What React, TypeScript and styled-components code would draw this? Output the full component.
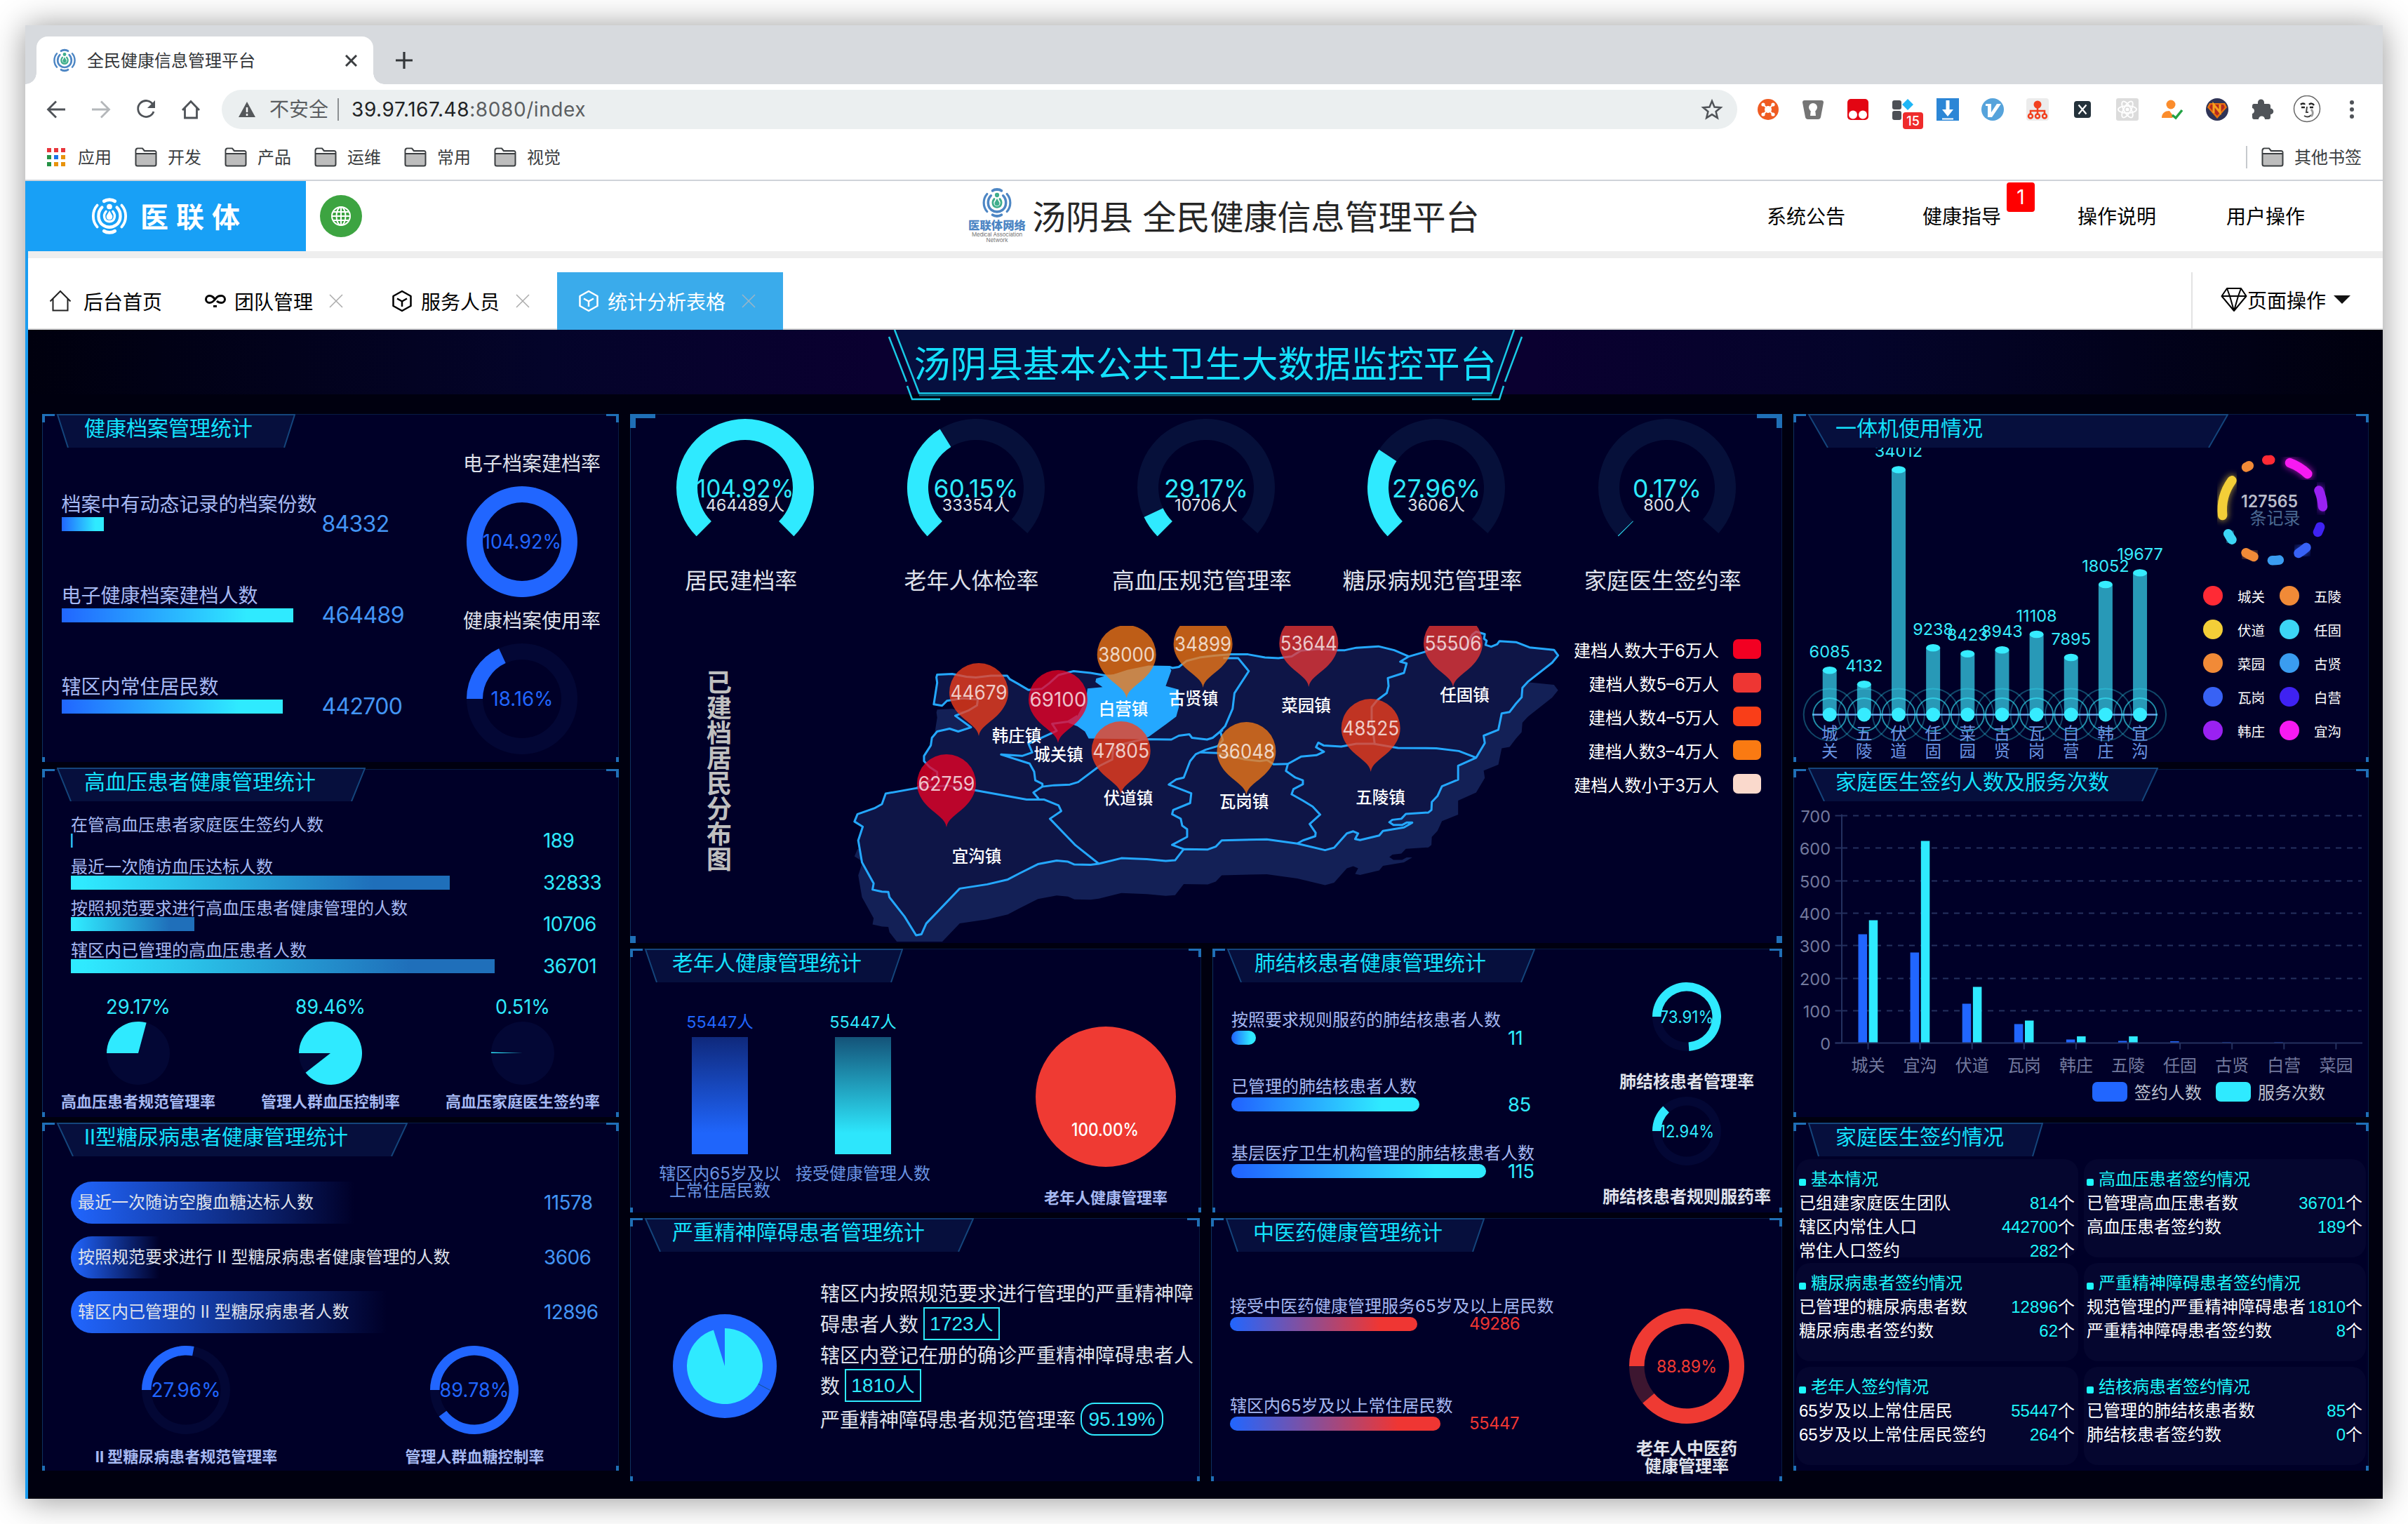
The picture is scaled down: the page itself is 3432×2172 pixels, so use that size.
import React from 'react';
import styled, { createGlobalStyle, css } from 'styled-components';

const SANS = `Inter, "Noto Sans CJK SC", sans-serif`;
const ARIAL = `"Liberation Sans", "Noto Sans CJK SC", sans-serif`;
const CYAN = '#2feaff';
const BLUE = '#2166ff';
const RED = '#ef3a33';
const LILAC = '#a6b9f2';
const PALE = '#dfe1ea';

const GlobalStyle = createGlobalStyle`
  * { box-sizing: border-box; }
  body { margin: 0; background: #fff; font-family: ${SANS}; }
  svg { display: block; flex: none; }
`;

/* ---------- geometry helpers ---------- */

const polar = (cx: number, cy: number, r: number, deg: number) => {
  const a = (deg * Math.PI) / 180;
  return `${(cx + r * Math.sin(a)).toFixed(2)} ${(cy - r * Math.cos(a)).toFixed(2)}`;
};

const arcPath = (cx: number, cy: number, r: number, a0: number, a1: number) =>
  `M${polar(cx, cy, r, a0)}A${r} ${r} 0 ${a1 - a0 > 180 ? 1 : 0} 1 ${polar(cx, cy, r, a1)}`;

const ringPath = (cx: number, cy: number, ro: number, ri: number, a0: number, end: number) => {
  const a1 = Math.min(end, a0 + 359.98);
  const big = a1 - a0 > 180 ? 1 : 0;
  const inner = ri > 0 ? `L${polar(cx, cy, ri, a1)}A${ri} ${ri} 0 ${big} 0 ${polar(cx, cy, ri, a0)}` : `L${cx} ${cy}`;
  return `M${polar(cx, cy, ro, a0)}A${ro} ${ro} 0 ${big} 1 ${polar(cx, cy, ro, a1)}${inner}Z`;
};

interface LabelProps {
  x: number;
  y: number;
  size?: number;
  fill?: string;
  anchor?: 'start' | 'middle' | 'end';
  weight?: number;
  len?: number;
  children: React.ReactNode;
}

const Label = ({ x, y, size = 24, fill = '#fff', anchor = 'middle', weight = 400, len, children }: LabelProps) => (
  <text
    x={x}
    y={y}
    fontSize={size}
    fill={fill}
    fontWeight={weight}
    textAnchor={anchor}
    dominantBaseline="central"
    textLength={len}
    lengthAdjust="spacingAndGlyphs"
  >
    {children}
  </text>
);

/* ---------- browser frame ---------- */

const Desktop = styled.div`
  width: 3432px;
  height: 2172px;
  padding: 36px;
  background: #fff;
  overflow: hidden;
`;

const Window = styled.div`
  width: 3360px;
  height: 2100px;
  display: flex;
  flex-direction: column;
  background: #fff;
  box-shadow: 0 2px 44px rgba(0, 0, 0, 0.42);
`;

const TabStrip = styled.div`
  height: 84px;
  background: #d7dade;
  display: flex;
  align-items: flex-end;
  padding-left: 16px;
`;

const BrowserTab = styled.div`
  position: relative;
  width: 480px;
  height: 68px;
  border-radius: 16px 16px 0 0;
  background: #fff;
  display: flex;
  align-items: center;
  padding: 0 23px;
  font-size: 24px;
  color: #333639;
  &::before,
  &::after {
    content: '';
    position: absolute;
    bottom: 0;
    width: 16px;
    height: 16px;
  }
  &::before {
    left: -16px;
    background: radial-gradient(circle at 0 0, transparent 15.5px, #fff 16px);
  }
  &::after {
    right: -16px;
    background: radial-gradient(circle at 100% 0, transparent 15.5px, #fff 16px);
  }
`;

const TabTitle = styled.span`
  margin-left: 15px;
  padding-bottom: 3px;
  flex: 1;
`;

const NewTab = styled.div`
  height: 68px;
  margin-left: 31px;
  display: flex;
  align-items: center;
`;

const Toolbar = styled.div`
  height: 72px;
  display: flex;
  align-items: center;
  padding-left: 28px;
`;

const NavIcons = styled.div`
  display: flex;
  gap: 32px;
  width: 252px;
`;

const Omnibox = styled.div`
  width: 2160px;
  height: 56px;
  border-radius: 28px;
  background: #ebeff0;
  display: flex;
  align-items: center;
  padding: 0 20px 0 22px;
  font-size: 28px;
  color: #5b5e61;
`;

const Security = styled.span`
  margin-left: 18px;
  padding-right: 13px;
  border-right: 2px solid #8c8f92;
  line-height: 32px;
`;

const Url = styled.span`
  margin-left: 18px;
  flex: 1;
  letter-spacing: 0.58px;
  b {
    font-weight: 400;
    color: #202224;
  }
`;

const Extensions = styled.div`
  display: flex;
  gap: 24px;
  margin-left: 24px;
`;

const ExtSlot = styled.div`
  position: relative;
  width: 40px;
  height: 40px;
`;

const ExtBadge = styled.span`
  position: absolute;
  left: 20px;
  top: 24px;
  width: 29px;
  height: 24px;
  border-radius: 4px;
  background: #ef2b2b;
  color: #fff;
  font-size: 18px;
  font-weight: 500;
  line-height: 25px;
  text-align: center;
`;

const Bookmarks = styled.div`
  height: 66px;
  border-bottom: 2px solid #cfd3d9;
  display: flex;
  align-items: center;
  padding: 0 28px 0 31px;
  font-size: 24px;
  color: #3b3e41;
`;

const Bookmark = styled.div<{ $w: number; $gap?: number }>`
  width: ${p => p.$w}px;
  display: flex;
  align-items: center;
  gap: ${p => p.$gap ?? 15}px;
  white-space: nowrap;
  span {
    padding-bottom: 3px;
  }
`;

const OtherBookmarks = styled(Bookmark)`
  margin-left: auto;
  padding-left: 20px;
  border-left: 2px solid #c6c9cd;
  height: 32px;
`;

/* ---------- application header ---------- */

const AppHeader = styled.header`
  height: 100px;
  display: flex;
  align-items: center;
  & > * {
    flex: none;
  }
`;

const Brand = styled.div`
  width: 400px;
  height: 100px;
  background: #18a0f6;
  display: flex;
  align-items: center;
  padding-left: 93px;
  gap: 17px;
  color: #fff;
  font-size: 40px;
  font-weight: 700;
  letter-spacing: 11px;
  span {
    padding-bottom: 3px;
  }
`;

const GlobeButton = styled.div`
  width: 60px;
  height: 60px;
  margin-left: 20px;
  border-radius: 50%;
  background: #3da441;
  display: flex;
  align-items: center;
  justify-content: center;
`;

const NetworkLogo = styled.div`
  width: 82px;
  height: 82px;
  margin-left: 864px;
  display: flex;
  flex-direction: column;
  align-items: center;
  color: #4d86c4;
  font-size: 16.4px;
  font-weight: 900;
  line-height: 20px;
  small {
    width: 82px;
    font-size: 8px;
    font-weight: 400;
    line-height: 7.5px;
    color: #777;
    text-align: center;
    letter-spacing: -0.2px;
  }
`;

const AppTitle = styled.h1`
  width: 646px;
  margin: 0;
  padding: 0 0 4px 9px;
  font-size: 48px;
  font-weight: 400;
  color: #262626;
  white-space: pre;
  letter-spacing: 0;
`;

const Menu = styled.nav`
  display: flex;
  margin-left: 410px;
  padding-bottom: 2px;
  font-size: 28px;
  color: #000;
`;

const MenuItem = styled.span<{ $gap: number }>`
  position: relative;
  width: 112px;
  margin-right: ${p => p.$gap}px;
`;

const MenuBadge = styled.i`
  position: absolute;
  left: 120px;
  top: -27px;
  width: 40px;
  height: 42px;
  border-radius: 4px;
  background: #f00;
  color: #fff;
  font: 400 28px/42px ${SANS};
  text-align: center;
`;

const Divider = styled.div`
  height: 10px;
  background: #eee;
`;

const Content = styled.div`
  flex: 1;
  border-left: 4px solid #1b9df0;
  display: flex;
  flex-direction: column;
`;

const PageTabs = styled.div`
  height: 102px;
  border-bottom: 2px solid #d9d9d9;
  display: flex;
  align-items: flex-end;
  font-size: 28px;
  color: #000;
`;

const PageTab = styled.div<{ $active?: boolean; $w?: number; $gap?: number }>`
  height: 82px;
  margin-bottom: -2px;
  padding: 0 39px 0 30px;
  ${p => p.$w && css`width: ${p.$w}px; padding-right: 0;`}
  display: flex;
  align-items: center;
  gap: ${p => p.$gap ?? 12}px;
  white-space: nowrap;
  color: ${p => (p.$active ? '#fff' : '#000')};
  background: ${p => (p.$active ? '#3aabeb' : 'transparent')};
`;

const CloseMark = styled.span`
  margin-left: 11px;
  color: #aaa;
`;

const PageActions = styled.div`
  height: 80px;
  width: 273px;
  margin-left: auto;
  border-left: 2px solid #e3e3e3;
  display: flex;
  align-items: center;
  padding: 0 0 2px 40px;
`;

/* ---------- dashboard shell ---------- */

const Dashboard = styled.main`
  height: 1666px;
  background: #00000f;
`;

const Banner = styled.div`
  height: 120px;
  background: linear-gradient(90deg, #00000e 0%, #04042a 22%, #0a0030 36%, #0a0030 64%, #04042a 78%, #00000e 100%) no-repeat 0 0 / 100% 92px;
  display: flex;
  justify-content: center;
`;

const Columns = styled.div`
  display: grid;
  grid-template-columns: 822px 1642px 820px;
  column-gap: 16px;
  padding-left: 20px;
`;

const Column = styled.div<{ $rows: string }>`
  display: grid;
  grid-template-rows: ${p => p.$rows};
`;

const Pair = styled.div<{ $cols: string }>`
  display: grid;
  grid-template-columns: ${p => p.$cols};
  justify-content: space-between;
`;

const mark = 'linear-gradient(#1f6fb6, #1f6fb6)';

const PanelBox = styled.section<{ $big?: boolean; $h: number }>`
  height: ${p => p.$h}px;
  display: flex;
  flex-direction: column;
  background-color: #000028;
  background-repeat: no-repeat;
  background-image: ${mark}, ${mark}, ${mark}, ${mark}, ${mark}, ${mark},
    linear-gradient(#0e315f, #0e315f), linear-gradient(#081b45, #081b45), linear-gradient(#081b45, #081b45);
  background-position: 0 0, 0 0, 100% 0, 100% 0, 0 100%, 100% 100%, 0 0, 0 0, 100% 0;
  background-size: ${p => (p.$big ? '36px 6px, 8px 20px, 36px 6px, 8px 20px, 8px 10px, 8px 10px' : '18px 3px, 4px 12px, 18px 3px, 4px 12px, 4px 7px, 4px 7px')},
    1px 100%, 100% 1px, 1px 100%;
`;

const TitleBox = styled.h2<{ $lift?: boolean; $w: number }>`
  position: relative;
  width: ${p => p.$w}px;
  height: ${p => (p.$lift ? 50 : 48)}px;
  margin: ${p => (p.$lift ? -2 : 0)}px 0 0 21px;
  padding-left: 39px;
  font-size: 30px;
  font-weight: 400;
  line-height: ${p => (p.$lift ? 41 : 40)}px;
  color: #14e1fc;
  white-space: nowrap;
  svg {
    position: absolute;
    left: 0;
    top: 0;
  }
  span {
    position: relative;
  }
`;

const PanelTitle = ({ text, w, lift }: { text: string; w: number; lift?: boolean }) => {
  const inset = Math.round(w * 0.046);
  return (
    <TitleBox $w={w} $lift={lift}>
      <svg width={w} height="48" viewBox={`0 0 ${w} 48`}>
        <path d={`M1 1H${w - 1}L${w - inset} 48H${inset}Z`} fill="#060f3d" />
        <path d={`M${inset} 48L1 1H${w - 1}L${w - inset} 48`} fill="none" stroke="#14457c" strokeWidth="2" />
      </svg>
      <span>{text}</span>
    </TitleBox>
  );
};

const Body = styled.div<{ $dir?: string }>`
  flex: 1;
  min-height: 0;
  display: flex;
  flex-direction: ${p => p.$dir ?? 'row'};
`;

const Stack = styled.div<{ $w?: number; $pt?: number; $pl?: number; $align?: string }>`
  width: ${p => (p.$w ? `${p.$w}px` : 'auto')};
  padding: ${p => p.$pt ?? 0}px 0 0 ${p => p.$pl ?? 0}px;
  display: flex;
  flex-direction: column;
  align-items: ${p => p.$align ?? 'stretch'};
  flex: none;
`;

const Caption = styled.div<{ $size: number; $lh: number; $mt?: number; $color?: string; $bold?: boolean }>`
  font-size: ${p => p.$size}px;
  line-height: ${p => p.$lh}px;
  margin-top: ${p => p.$mt ?? 0}px;
  color: ${p => p.$color ?? PALE};
  font-weight: ${p => (p.$bold ? 700 : 400)};
  white-space: nowrap;
  text-align: center;
`;

/* ---------- meters ---------- */

const MeterBox = styled.div<{ $gap: number }>`
  margin-bottom: ${p => p.$gap}px;
`;

const MeterName = styled.div<{ $size: number; $lh: number }>`
  font-size: ${p => p.$size}px;
  line-height: ${p => p.$lh}px;
  color: ${LILAC};
  white-space: nowrap;
`;

const MeterLine = styled.div<{ $track: number }>`
  height: 20px;
  display: grid;
  grid-template-columns: ${p => p.$track}px auto;
  align-items: center;
`;

const MeterBar = styled.div<{ $fill: string; $round?: boolean }>`
  height: 20px;
  background: ${p => p.$fill};
  border-radius: ${p => (p.$round ? 10 : 0)}px;
`;

const MeterValue = styled.span<{ $size: number; $color: string }>`
  font-size: ${p => p.$size}px;
  line-height: 20px;
  color: ${p => p.$color};
  letter-spacing: -0.022em;
`;

interface MeterStyle {
  size: number;
  lh: number;
  gap: number;
  track: number;
  fill: string;
  round?: boolean;
  valueSize: number;
  valueColor: string;
}

const Meters = ({ rows, look }: { rows: [string, number, string][]; look: MeterStyle }) => (
  <>
    {rows.map(([name, width, value]) => (
      <MeterBox key={name} $gap={look.gap}>
        <MeterName $size={look.size} $lh={look.lh}>{name}</MeterName>
        <MeterLine $track={look.track}>
          <MeterBar $fill={look.fill} $round={look.round} style={{ width }} />
          <MeterValue $size={look.valueSize} $color={look.valueColor}>{value}</MeterValue>
        </MeterLine>
      </MeterBox>
    ))}
  </>
);

interface RingProps {
  r: number;
  inner?: number;
  pct: number;
  color: string;
  track?: string;
  text?: string;
  size?: number;
  len?: number;
}

const Ring = ({ r, inner = 0, pct, color, track = '#030735', text, size = 28, len }: RingProps) => (
  <svg width={r * 2} height={r * 2} viewBox={`0 0 ${r * 2} ${r * 2}`}>
    <path d={ringPath(r, r, r, inner, -90, 270)} fill={track} />
    <path d={ringPath(r, r, r, inner, -90, -90 + Math.min(pct, 100) * 3.6)} fill={color} />
    {text && <Label x={r} y={r} size={size} fill={color} len={len}>{text}</Label>}
  </svg>
);

/* ---------- left column ---------- */

const RingShift = styled.div<{ $mt: number }>`
  margin: ${p => p.$mt}px 0 0 5px;
`;

const RecordsPanel = () => (
  <PanelBox $h={496}>
    <PanelTitle text="健康档案管理统计" w={340} />
    <Body>
      <Stack $w={600} $pt={63} $pl={27.5}>
        <Meters
          rows={[
            ['档案中有动态记录的档案份数', 60, '84332'],
            ['电子健康档案建档人数', 330, '464489'],
            ['辖区内常住居民数', 315, '442700'],
          ]}
          look={{ size: 28, lh: 36, gap: 74, track: 371, fill: `linear-gradient(90deg, ${BLUE}, ${CYAN} 80%)`, valueSize: 32, valueColor: '#4395f5' }}
        />
      </Stack>
      <Stack $w={200} $pt={5} $align="flex-start">
        <Caption $size={28} $lh={36}>电子档案建档率</Caption>
        <RingShift $mt={14}><Ring r={79} inner={56} pct={100} color={BLUE} text="104.92%" len={112} /></RingShift>
        <Caption $size={28} $lh={36} $mt={16}>健康档案使用率</Caption>
        <RingShift $mt={14}><Ring r={79} inner={56} pct={18.16} color={BLUE} text="18.16%" len={89} /></RingShift>
      </Stack>
    </Body>
  </PanelBox>
);

const Thirds = styled.div<{ $n: number; $pt: number }>`
  display: grid;
  grid-template-columns: repeat(${p => p.$n}, 1fr);
  justify-items: center;
  padding-top: ${p => p.$pt}px;
`;

const HypertensionPanel = () => (
  <PanelBox $h={496}>
    <PanelTitle text="高血压患者健康管理统计" w={440} lift />
    <Body $dir="column">
      <Stack $pt={20} $pl={41}>
        <Meters
          rows={[
            ['在管高血压患者家庭医生签约人数', 3, '189'],
            ['最近一次随访血压达标人数', 540, '32833'],
            ['按照规范要求进行高血压患者健康管理的人数', 176, '10706'],
            ['辖区内已管理的高血压患者人数', 604, '36701'],
          ]}
          look={{ size: 24, lh: 24, gap: 15.5, track: 673, fill: `linear-gradient(90deg, ${CYAN} 3%, #1f6fba 80%)`, valueSize: 28, valueColor: CYAN }}
        />
      </Stack>
      <Thirds $n={3} $pt={16}>
        {([['29.17%', 29.17, '高血压患者规范管理率', 92], ['89.46%', 89.46, '管理人群血压控制率', 100], ['0.51%', 0.51, '高血压家庭医生签约率', 78]] as const).map(([t, pct, name, len]) => (
          <Stack key={name} $align="center">
            <svg width="120" height="38" viewBox="0 0 120 38"><Label x={60} y={17} size={28} fill={CYAN} len={len}>{t}</Label></svg>
            <Ring r={45} pct={pct} color={CYAN} />
            <Caption $size={22} $lh={28} $mt={10} $color={LILAC} $bold>{name}</Caption>
          </Stack>
        ))}
      </Thirds>
    </Body>
  </PanelBox>
);

const PillRow = styled.div`
  height: 60px;
  margin-bottom: 18.3px;
  display: grid;
  grid-template-columns: 674px auto;
  align-items: center;
`;

const Pill = styled.div<{ $fade: number }>`
  height: 60px;
  padding-left: 10px;
  border-radius: 30px 0 0 30px;
  background: linear-gradient(90deg, ${BLUE}, rgba(33, 102, 255, 0)) no-repeat 0 0 / ${p => p.$fade}px 100%;
  font-size: 24px;
  line-height: 60px;
  color: ${PALE};
  white-space: pre;
`;

const DiabetesPanel = () => (
  <PanelBox $h={496}>
    <PanelTitle text="II型糖尿病患者健康管理统计" w={500} />
    <Body $dir="column">
      <Stack $pt={35.5} $pl={41}>
        {([['最近一次随访空腹血糖达标人数', 404, '11578'], ['按照规范要求进行 II 型糖尿病患者健康管理的人数', 126, '3606'], ['辖区内已管理的 II 型糖尿病患者人数', 450, '12896']] as const).map(([name, fade, value]) => (
          <PillRow key={name}>
            <Pill $fade={fade}>{name}</Pill>
            <MeterValue $size={28} $color="#4395f5">{value}</MeterValue>
          </PillRow>
        ))}
      </Stack>
      <Thirds $n={2} $pt={0}>
        <Stack $align="center">
          <Ring r={63} inner={49.5} pct={27.96} color={BLUE} text="27.96%" len={99} />
          <Caption $size={22} $lh={28} $mt={18} $color={LILAC} $bold>II 型糖尿病患者规范管理率</Caption>
        </Stack>
        <Stack $align="center">
          <Ring r={63} inner={49.5} pct={89.78} color={BLUE} text="89.78%" len={99} />
          <Caption $size={22} $lh={28} $mt={18} $color={LILAC} $bold>管理人群血糖控制率</Caption>
        </Stack>
      </Thirds>
    </Body>
  </PanelBox>
);

/* ---------- centre: gauges and map ---------- */

const GaugeRow = styled.div`
  display: grid;
  grid-template-columns: repeat(5, 1fr);
  justify-items: center;
  padding-top: 7px;
`;

const GaugeName = styled(Caption)`
  margin-left: -12px;
`;

const gauges = [
  { pct: '104.92%', count: '464489人', sweep: 270, name: '居民建档率', len: 139 },
  { pct: '60.15%', count: '33354人', sweep: 103.4, name: '老年人体检率', len: 121 },
  { pct: '29.17%', count: '10706人', sweep: 19.6, name: '高血压规范管理率', len: 120 },
  { pct: '27.96%', count: '3606人', sweep: 78.6, name: '糖尿病规范管理率', len: 126 },
  { pct: '0.17%', count: '800人', sweep: 0.7, name: '家庭医生签约率', len: 98 },
];

const Gauge = ({ g }: { g: (typeof gauges)[number] }) => (
  <Stack $align="center">
    <svg width="196" height="196" viewBox="0 0 196 196">
      <path d={ringPath(98, 98, 98, 68, -135, 131.5)} fill="#06103a" />
      <path d={ringPath(98, 98, 98, 68, -135, -135 + g.sweep)} fill={CYAN} />
      <Label x={98} y={98.5} size={36} fill={CYAN} len={g.len}>{g.pct}</Label>
      <Label x={98} y={122.5} size={23.5} fill={PALE}>{g.count}</Label>
    </svg>
    <GaugeName $size={32} $lh={40} $mt={15}>{g.name}</GaugeName>
  </Stack>
);

const outline =
  '832,787 872,785 910,793 935,795 975,790 1018,790 1025,800 1045,812 1075,831 1110,828 1130,812 1155,788 1195,777 1240,782 1283,790 1300,790 1340,776 1395,764 1450,765 1458,768 1475,765 1495,748 1530,738 1568,733 1613,729 1659,729 1704,738 1740,740 1775,735 1800,718 1850,713 1897,717 1917,717 1947,710 2006,706 2048,717 2087,735 2129,722 2160,705 2200,708 2236,712 2256,672 2266,664 2289,671 2287,684 2294,690 2291,702 2306,707 2322,700 2328,691 2372,694 2408,709 2473,716 2484,732 2468,753 2403,808 2389,825 2387,852 2372,870 2355,894 2334,898 2325,945 2286,962 2289,983 2266,1025 2218,1048 2218,1088 2175,1107 2163,1135 2148,1152 2147,1175 2139,1182 2079,1186 2067,1200 2043,1203 2035,1210 2046,1218 2069,1218 2081,1211 2096,1211 2074,1225 2018,1235 2008,1248 1957,1261 1944,1258 1952,1242 1939,1236 1922,1242 1888,1283 1864,1290 1790,1271 1709,1259 1589,1262 1573,1280 1552,1288 1488,1287 1465,1319 1440,1321 1390,1316 1322,1313 1262,1329 1240,1332 1197,1331 1180,1323 1150,1320 1100,1330 1050,1357 1020,1374 965,1388 892,1400 803,1500 790,1531 776,1534 745,1480 705,1425 702,1410 685,1409 660,1403 663,1385 632,1325 622,1262 634,1223 612,1208 620,1187 665,1170 685,1158 695,1128 778,1112 805,1095 832,1080 832,1066 812,1052 797,1035 797,1020 815,990 818,968 832,950 865,942 888,950 922,938 880,905 915,890 938,875 940,858 900,855 858,862 845,876 823,872 832,810 830,795';

const whiteCamp =
  '1283,790 1340,778 1395,764 1450,765 1455,775 1440,820 1475,830 1475,880 1468,907 1440,930 1395,965 1380,972 1235,970 1225,950 1205,935 1180,925 1205,905 1228,860 1232,827 1272,823 1253,808 1255,798';

const borders = [
  '778,1112 860,1105 930,1118 1070,1145 1117,1145 1155,1162 1162,1178 1132,1200 1200,1276 1262,1329',
  '1102,1143 1088,1125 1112,1108 1143,1104 1185,1102 1207,1095 1265,1048 1298,1030 1300,1000 1330,985 1380,972 1455,973 1475,962 1503,958 1510,968 1550,973 1565,968 1583,952 1592,946',
  '1112,1108 1112,1100 1093,1090 1090,1065 1078,1042 1002,1016 1058,1020 1085,1010 1075,985 1110,968 1150,948 1138,928 1180,922 1205,905',
  '1583,952 1598,935 1618,885 1623,840 1661,777 1633,740 1593,740',
  '1586,952 1592,975 1578,992 1547,1002 1520,1015 1505,1035 1488,1082 1468,1087 1448,1102 1508,1127 1505,1155 1460,1175 1457,1187 1480,1200 1484,1220 1497,1230 1497,1252 1457,1275 1488,1287',
  '1532,1010 1580,1012 1650,1030 1690,1035 1710,1032 1727,1044 1765,1043',
  '2266,1025 2220,1006 2160,998 2058,997 1993,985 1947,985 1907,993 1860,990 1846,982 1840,995 1861,1008 1841,1018 1800,1022 1765,1043 1760,1063 1785,1082 1805,1090 1805,1101 1780,1115 1775,1130 1805,1148 1831,1165 1851,1188 1823,1215 1839,1240 1838,1250 1805,1262 1790,1271',
  '2087,735 2064,750 2081,755 2074,782 2031,797 2033,820 2028,840 2003,860 1988,880 1988,920 1996,985',
];

const SCALE = ['#f20022', '#ee3633', '#f93e18', '#fa7a12', '#fad9cc'];

const pins: [number, number, string, number][] = [
  [1395, 987, '44679', 2],
  [1508, 997, '69100', 0],
  [1605.7, 933, '38000', 3],
  [1714.6, 918, '34899', 3],
  [1865.3, 917, '53644', 1],
  [2071, 917, '55506', 1],
  [1953.7, 1038, '48525', 2],
  [1597.7, 1070, '47805', 2],
  [1776.4, 1071, '36048', 3],
  [1349, 1117, '62759', 0],
];

const towns: [number, number, string][] = [
  [1449, 1048, '韩庄镇'],
  [1508.5, 1075, '城关镇'],
  [1601, 1010, '白营镇'],
  [1701, 995, '古贤镇'],
  [1861.5, 1005.5, '菜园镇'],
  [2087.5, 990, '任固镇'],
  [1608, 1137.5, '伏道镇'],
  [1773, 1142, '瓦岗镇'],
  [1967.5, 1136, '五陵镇'],
  [1392, 1220, '宜沟镇'],
];

const PIN = 'M-42 0A42 42 0 0 1 42 0C42 13 35 24 26 33C12 46 2 50 0 62C-2 50 -12 46 -26 33C-35 24 -42 13 -42 0Z';

const TownMap = () => (
  <svg width="1040" height="450" viewBox="1200 892 1040 450">
    <g transform="translate(890 570) scale(0.5357 0.4974)" strokeLinejoin="round">
      <polygon points={outline} transform="translate(0 100)" fill="#132056" />
      <polygon points={outline} fill="#0e1547" />
      <polygon points={whiteCamp} fill="#24a8ff" />
      {borders.map(b => (
        <polyline key={b} points={b} fill="none" stroke="#24a8ff" strokeWidth="3" vectorEffect="non-scaling-stroke" />
      ))}
      <polygon points={outline} fill="none" stroke="#24a8ff" strokeWidth="3" vectorEffect="non-scaling-stroke" />
    </g>
    {towns.map(([x, y, name]) => (
      <Label key={name} x={x} y={y} size={23.5} weight={500}>{name}</Label>
    ))}
    {pins.map(([x, y, value, level]) => (
      <g key={value} transform={`translate(${x} ${y})`}>
        <path d={PIN} fill={SCALE[level]} opacity="0.76" />
        <Label x={0} y={0} size={28} fill="rgba(255,255,255,0.76)" len={81}>{value}</Label>
      </g>
    ))}
  </svg>
);

const MapRow = styled.div`
  display: flex;
  align-items: flex-start;
`;

const VerticalTitle = styled.div`
  writing-mode: vertical-rl;
  width: 36px;
  margin: 106px 160px 0 106px;
  font-size: 36px;
  font-weight: 700;
  line-height: 36px;
  color: #bfbfbf;
  white-space: nowrap;
`;

const MapBox = styled.div`
  margin-top: 44px;
`;

const MapLegend = styled.div`
  margin: 63px 30px 0 auto;
  display: flex;
  flex-direction: column;
  gap: 20px;
`;

const MapLegendRow = styled.div`
  height: 28px;
  display: flex;
  align-items: center;
  justify-content: flex-end;
  gap: 20px;
  font-size: 24px;
  color: #fff;
`;

const Swatch = styled.i<{ $w: number; $c: string }>`
  width: ${p => p.$w}px;
  height: 28px;
  border-radius: 7px;
  background: ${p => p.$c};
`;

const MapPanel = () => (
  <PanelBox $h={754} $big>
    <GaugeRow>{gauges.map(g => <Gauge key={g.name} g={g} />)}</GaugeRow>
    <MapRow>
      <VerticalTitle>已建档居民分布图</VerticalTitle>
      <MapBox><TownMap /></MapBox>
      <MapLegend>
        {['建档人数大于6万人', '建档人数5–6万人', '建档人数4–5万人', '建档人数3–4万人', '建档人数小于3万人'].map((t, i) => (
          <MapLegendRow key={t}>
            {t}
            <Swatch $w={40} $c={SCALE[i]} />
          </MapLegendRow>
        ))}
      </MapLegend>
    </MapRow>
  </PanelBox>
);

/* ---------- centre: lower panels ---------- */

const TallBar = styled.div<{ $from: string; $to: string }>`
  width: 80px;
  height: 167px;
  margin-top: 6px;
  background: linear-gradient(180deg, ${p => p.$from}, ${p => p.$to} 82%);
`;

const ElderlyPanel = () => (
  <PanelBox $h={376}>
    <PanelTitle text="老年人健康管理统计" w={368} />
    <Body>
      <Stack $w={26} />
      <Stack $w={204} $pt={42} $align="center">
        <Caption $size={23.5} $lh={30} $color={BLUE}>55447人</Caption>
        <TallBar $from="#0f297c" $to="#1f65fb" />
        <Caption $size={24} $lh={24} $mt={16} $color="#6a94e2">辖区内65岁及以<br />上常住居民数</Caption>
      </Stack>
      <Stack $w={204} $pt={42} $align="center">
        <Caption $size={23.5} $lh={30} $color={CYAN}>55447人</Caption>
        <TallBar $from="#145379" $to="#2de6fc" />
        <Caption $size={24} $lh={24} $mt={16} $color="#6a94e2">接受健康管理人数</Caption>
      </Stack>
      <Stack $w={344} $pl={144} $pt={63} $align="center">
        <svg width="200" height="200" viewBox="0 0 200 200">
          <circle cx="100" cy="100" r="100" fill={RED} />
          <Label x={99} y={147} size={25} weight={500} len={96}>100.00%</Label>
        </svg>
        <Caption $size={22} $lh={28} $mt={30} $color={LILAC} $bold>老年人健康管理率</Caption>
      </Stack>
    </Body>
  </PanelBox>
);

const TextLines = styled.div`
  margin-left: 62px;
  padding-top: 36px;
  font-family: ${ARIAL};
  font-size: 28px;
  color: ${PALE};
`;

const TextLine = styled.div<{ $h: number }>`
  height: ${p => p.$h}px;
  display: flex;
  align-items: center;
  white-space: nowrap;
`;

const Chip = styled.span<{ $w: number; $round?: boolean }>`
  width: ${p => p.$w}px;
  height: 47px;
  margin-left: 7px;
  border: 2px solid ${CYAN};
  border-radius: ${p => (p.$round ? 20 : 0)}px;
  color: ${CYAN};
  line-height: 43px;
  text-align: center;
`;

const PieSlot = styled.div`
  margin: 89px 0 0 61px;
`;

const MentalPanel = () => (
  <PanelBox $h={375}>
    <PanelTitle text="严重精神障碍患者管理统计" w={469} />
    <Body>
      <PieSlot>
        <svg width="148" height="148" viewBox="0 0 148 148">
          <circle cx="74" cy="74" r="74" fill={BLUE} />
          <path d={`M${polar(74, 74, 54, 118)}L${polar(74, 74, 74, 118)}`} stroke="#14508f" strokeWidth="1" />
          <path d={ringPath(74, 74, 54, 0, 0, 342.7)} fill={CYAN} />
        </svg>
      </PieSlot>
      <TextLines>
        <TextLine $h={44}>辖区内按照规范要求进行管理的严重精神障</TextLine>
        <TextLine $h={44}>碍患者人数<Chip $w={109}>1723人</Chip></TextLine>
        <TextLine $h={43}>辖区内登记在册的确诊严重精神障碍患者人</TextLine>
        <TextLine $h={46}>数<Chip $w={109}>1810人</Chip></TextLine>
        <TextLine $h={50}>严重精神障碍患者规范管理率<Chip $w={118} $round>95.19%</Chip></TextLine>
      </TextLines>
    </Body>
  </PanelBox>
);

const TuberculosisPanel = () => (
  <PanelBox $h={376}>
    <PanelTitle text="肺结核患者健康管理统计" w={439} />
    <Body>
      <Stack $w={556} $pt={39} $pl={27}>
        <Meters
          rows={[
            ['按照要求规则服药的肺结核患者人数', 35, '11'],
            ['已管理的肺结核患者人数', 268, '85'],
            ['基层医疗卫生机构管理的肺结核患者人数', 363, '115'],
          ]}
          look={{ size: 24, lh: 30, gap: 45, track: 394, fill: `linear-gradient(90deg, ${BLUE} 3%, ${CYAN} 80%)`, round: true, valueSize: 27.5, valueColor: CYAN }}
        />
      </Stack>
      <Stack $w={240} $align="center">
        <Ring r={49} inner={36.5} pct={73.91} color={CYAN} text="73.91%" size={24} len={77} />
        <Caption $size={24} $lh={32} $mt={28} $bold>肺结核患者管理率</Caption>
        <Stack $pt={5}><Ring r={49} inner={36.5} pct={12.94} color={CYAN} text="12.94%" size={24} len={78} /></Stack>
        <Caption $size={24} $lh={32} $mt={29} $bold>肺结核患者规则服药率</Caption>
      </Stack>
    </Body>
  </PanelBox>
);

const HerbalPanel = () => (
  <PanelBox $h={375}>
    <PanelTitle text="中医药健康管理统计" w={369} />
    <Body>
      <Stack $w={578} $pt={63} $pl={27}>
        <Meters
          rows={[
            ['接受中医药健康管理服务65岁及以上居民数', 267, '49286'],
            ['辖区内65岁及以上常住居民数', 300, '55447'],
          ]}
          look={{ size: 24, lh: 30, gap: 92, track: 341, fill: `linear-gradient(90deg, ${BLUE}, #ef3633 80%)`, round: true, valueSize: 24, valueColor: '#ee3633' }}
        />
      </Stack>
      <Stack $w={200} $pt={81} $align="center">
        <Ring r={82} inner={60.5} pct={88.89} color={RED} track="#3d1630" text="88.89%" size={24} len={86} />
        <Caption $size={24} $lh={25} $mt={23} $bold>老年人中医药<br />健康管理率</Caption>
      </Stack>
    </Body>
  </PanelBox>
);

/* ---------- right column ---------- */

const usage: [string, string, number, string][] = [
  ['城', '关', 955.3, '6085'],
  ['五', '陵', 975.3, '4132'],
  ['伏', '道', 669.4, '34012'],
  ['任', '固', 923.2, '9238'],
  ['菜', '园', 931.7, '8423'],
  ['古', '贤', 926.3, '8943'],
  ['瓦', '岗', 904, '11108'],
  ['白', '营', 937, '7895'],
  ['韩', '庄', 833, '18052'],
  ['宜', '沟', 816.4, '19677'],
];

const UsageChart = () => (
  <svg width="560" height="448" viewBox="2556 638 560 448">
    <path d="M2583 1018.5H3075" stroke="#6aa2e8" strokeWidth="2.5" />
    {usage.map(([a, b, top, value], i) => {
      const x = 2607.7 + i * 49.15;
      return (
        <g key={value}>
          <rect x={x - 10} y={top} width="20" height={1018.5 - top} fill="#2899b7" />
          <ellipse cx={x} cy={top} rx="10" ry="5.2" fill="#36ecff" />
          <circle cx={x} cy="1018.5" r="37" fill="none" stroke="#36ecff" strokeOpacity="0.3" strokeWidth="2" />
          <circle cx={x} cy="1018.5" r="23.5" fill="none" stroke="#36ecff" strokeOpacity="0.6" strokeWidth="2" />
          <circle cx={x} cy="1018.5" r="10" fill="#36ecff" />
          <Label x={x} y={top - 27} size={23.5} fill="#36ecff">{value}</Label>
          <Label x={x} y={1045.5} size={23.5} fill="#6a94e2">{a}</Label>
          <Label x={x} y={1070} size={23.5} fill="#6a94e2">{b}</Label>
        </g>
      );
    })}
  </svg>
);

const townLegend: [string, string][] = [
  ['城关', '#ff2a35'],
  ['五陵', '#f18a37'],
  ['伏道', '#f3ce38'],
  ['任固', '#3cd6f5'],
  ['菜园', '#f18a37'],
  ['古贤', '#3a9cf0'],
  ['瓦岗', '#3862f5'],
  ['白营', '#3f22f2'],
  ['韩庄', '#9a21f2'],
  ['宜沟', '#f71af2'],
];

const segments: [number, number, string][] = [
  [-6.6, -2.6, '#ff2a35'],
  [20, 44, '#f71af2'],
  [67, 86, '#9a21f2'],
  [109.5, 116, '#3f22f2'],
  [138, 149, '#3862f5'],
  [172.5, 180.5, '#3a9cf0'],
  [202, 212, '#f18a37'],
  [234, 242, '#3cd6f5'],
  [264, 306, '#f3ce38'],
  [328.5, 332, '#f18a37'],
];

const RecordDonut = () => (
  <svg width="260" height="188" viewBox="3116 638 260 188">
    <defs>
      <filter id="glow" x="-50%" y="-50%" width="200%" height="200%">
        <feGaussianBlur stdDeviation="4" />
      </filter>
    </defs>
    {segments.map(([a, b, c]) => (
      <g key={a} fill="none" stroke={c} strokeLinecap="round">
        <path d={arcPath(3239, 727, 71.7, a, b)} strokeWidth="17" opacity="0.55" filter="url(#glow)" />
        <path d={arcPath(3239, 727, 71.7, a, b)} strokeWidth="13.5" />
      </g>
    ))}
    <Label x={3234.5} y={714.5} size={24} weight={600} fill="#b9bccb" len={81}>127565</Label>
    <Label x={3242.6} y={738.5} size={24} fill="#4b6a92">条记录</Label>
  </svg>
);

const DotLegend = styled.div`
  display: grid;
  grid-template-columns: 109px 109px;
  grid-auto-rows: 48px;
  margin-top: -1px;
  padding-left: 24px;
`;

const DotItem = styled.div<{ $c: string }>`
  display: flex;
  align-items: center;
  gap: 21px;
  font-size: 19.5px;
  color: #fff;
  &::before {
    content: '';
    width: 28px;
    height: 28px;
    border-radius: 50%;
    background: ${p => p.$c};
  }
`;

const UsagePanel = () => (
  <PanelBox $h={496}>
    <PanelTitle text="一体机使用情况" w={599} />
    <Body>
      <UsageChart />
      <Stack $w={260}>
        <RecordDonut />
        <DotLegend>
          {townLegend.map(([name, c]) => <DotItem key={name} $c={c}>{name}</DotItem>)}
        </DotLegend>
      </Stack>
    </Body>
  </PanelBox>
);

const visits: [string, number, number][] = [
  ['城关', 1332, 1312],
  ['宜沟', 1358, 1199],
  ['伏道', 1431, 1407],
  ['瓦岗', 1460, 1455],
  ['韩庄', 1482, 1477.5],
  ['五陵', 1484, 1477.5],
  ['任固', 1484.5, 1487],
  ['古贤', 1486, 1487],
  ['白营', 1486, 1487],
  ['菜园', 1487, 1487],
];

const VisitsChart = () => (
  <svg width="820" height="396" viewBox="2556 1144.5 820 396">
    {[700, 600, 500, 400, 300, 200, 100, 0].map((v, i) => {
      const y = Math.round(1163 + i * 46.3);
      return (
        <g key={v}>
          <Label x={2609} y={y + 0.5} size={23.5} fill="#737a9e" anchor="end">{v}</Label>
          <path d={`M2615.5 ${y}H2624`} stroke="#24315f" strokeWidth="2" />
          {v > 0 && <path d={`M2625 ${y}H3366`} stroke="#24315f" strokeWidth="2" strokeDasharray="8 8" />}
        </g>
      );
    })}
    {visits.map(([name, a, b], i) => {
      const x = 2662.5 + i * 74.1;
      return (
        <g key={name}>
          <rect x={x - 14} y={a} width="12.5" height={1487 - a} fill={BLUE} />
          <rect x={x + 1.2} y={b} width="12.5" height={1487 - b} fill={CYAN} />
          <path d={`M${x} 1487V1496`} stroke="#24315f" strokeWidth="2" />
          <Label x={x} y={1518.5} size={24} fill="#737a9e">{name}</Label>
        </g>
      );
    })}
    <path d="M2625 1161V1487" stroke="#24315f" strokeWidth="2" />
    <path d="M2615.5 1487H3367" stroke="#24315f" strokeWidth="2" />
  </svg>
);

const ChartLegend = styled.div`
  display: flex;
  align-items: center;
  height: 31px;
  padding-left: 426px;
  font-size: 24px;
  color: #bcc0cf;
  span {
    margin: 0 20px 0 10px;
  }
`;

const VisitsPanel = () => (
  <PanelBox $h={496}>
    <PanelTitle text="家庭医生签约人数及服务次数" w={499} lift />
    <Body $dir="column">
      <VisitsChart />
      <ChartLegend>
        <Swatch $w={50} $c={BLUE} />
        <span>签约人数</span>
        <Swatch $w={50} $c={CYAN} />
        <span>服务次数</span>
      </ChartLegend>
    </Body>
  </PanelBox>
);

const CardGrid = styled.div`
  display: grid;
  grid-template-columns: 402px 402px;
  grid-template-rows: repeat(3, 140px);
  gap: 8px;
  padding: 4px;
`;

const Card = styled.div`
  padding: 12px 5px 0 4px;
  border-radius: 20px;
  background: #05062f;
  font-family: ${ARIAL};
  font-size: 24px;
  line-height: 34px;
  color: #fff;
`;

const CardTitle = styled.div`
  display: flex;
  align-items: center;
  color: #1df7fa;
  &::before {
    content: '';
    width: 10px;
    height: 10px;
    margin: 8px 7px 0 0;
    border-radius: 2px;
    background: #1df7fa;
  }
`;

const CardRow = styled.div`
  display: flex;
  justify-content: space-between;
  white-space: nowrap;
  b {
    font-weight: 400;
    color: #1df7fa;
  }
`;

const cards: { title: string; rows: [string, string][] }[] = [
  { title: '基本情况', rows: [['已组建家庭医生团队', '814'], ['辖区内常住人口', '442700'], ['常住人口签约', '282']] },
  { title: '高血压患者签约情况', rows: [['已管理高血压患者数', '36701'], ['高血压患者签约数', '189']] },
  { title: '糖尿病患者签约情况', rows: [['已管理的糖尿病患者数', '12896'], ['糖尿病患者签约数', '62']] },
  { title: '严重精神障碍患者签约情况', rows: [['规范管理的严重精神障碍患者', '1810'], ['严重精神障碍患者签约数', '8']] },
  { title: '老年人签约情况', rows: [['65岁及以上常住居民', '55447'], ['65岁及以上常住居民签约', '264']] },
  { title: '结核病患者签约情况', rows: [['已管理的肺结核患者数', '85'], ['肺结核患者签约数', '0']] },
];

const SigningPanel = () => (
  <PanelBox $h={496}>
    <PanelTitle text="家庭医生签约情况" w={335} />
    <CardGrid>
      {cards.map(c => (
        <Card key={c.title}>
          <CardTitle>{c.title}</CardTitle>
          {c.rows.map(([k, v]) => (
            <CardRow key={k}>
              <span>{k}</span>
              <span><b>{v}</b>个</span>
            </CardRow>
          ))}
        </Card>
      ))}
    </CardGrid>
  </PanelBox>
);

/* ---------- icons ---------- */

const Emblem = ({ size, outer, inner }: { size: number; outer: string; inner: string }) => (
  <svg width={size} height={size} viewBox="0 0 56 56" fill="none" stroke={outer} strokeLinecap="round">
    <path d="M20 6C24 3 32 3 36 6M20 50C24 53 32 53 36 50" strokeWidth="5" />
    <path d="M10 12C2 21 2 35 10 44M46 12C54 21 54 35 46 44" strokeWidth="4" />
    <path d="M17 15C10 22 10 35 18 41C24 45.500 32 45.500 38 41C46 35 46 22 39 15" strokeWidth="4.500" />
    <path d="M23 21C18 27 20 36 28 36C36 36 38 27 33 21" strokeWidth="3.500" stroke={inner} />
    <path d="M28 20L32 27A4.500 4.500 0 1 1 24 27Z" fill={inner} stroke="none" />
    <circle cx="28" cy="14" r="4" fill={inner} stroke="none" />
  </svg>
);

const Folder = () => (
  <svg width="32" height="28" viewBox="0 0 32 28">
    <path d="M1.500 4A2.500 2.500 0 0 1 4 1.500H11L14 5H28A2.500 2.500 0 0 1 30.500 7.500V24A2.500 2.500 0 0 1 28 26.500H4A2.500 2.500 0 0 1 1.500 24Z" fill="#bdbdbd" stroke="#3b3e41" strokeWidth="2" />
    <path d="M2.500 5V8.500H29.500V6.500H13L10.500 2.500H4Z" fill="#fff" />
    <path d="M2 9H30" stroke="#3b3e41" strokeWidth="2" />
  </svg>
);

const AppsGrid = () => (
  <svg width="26" height="26" viewBox="0 0 26 26">
    {['#e8353b', '#e8353b', '#e8353b', '#259245', '#1a73e8', '#e8930c', '#259245', '#e8930c', '#e8930c'].map((c, i) => (
      <rect key={i} x={(i % 3) * 10} y={Math.floor(i / 3) * 10} width="6" height="6" fill={c} />
    ))}
  </svg>
);

const Cross = ({ size, color, width }: { size: number; color: string; width: number }) => (
  <svg width={size} height={size} viewBox={`0 0 ${size} ${size}`} stroke={color} strokeWidth={width}>
    <path d={`M1 1L${size - 1} ${size - 1}M${size - 1} 1L1 ${size - 1}`} />
  </svg>
);

const Cube = ({ color }: { color: string }) => (
  <svg width="30" height="32" viewBox="0 0 30 32" fill="none" stroke={color} strokeWidth="2.500" strokeLinejoin="round">
    <path d="M15 2L27.500 9V23L15 30L2.500 23V9Z" />
    <path d="M8 12.500L15 16.500L22 12.500M15 16.500V24" />
  </svg>
);

const extensionArt: React.ReactNode[] = [
  <g>
    <circle cx="20" cy="20" r="15" fill="#ef5b22" />
    <path d="M13 13L27 27M27 13L13 27" stroke="#fff" strokeWidth="1.800" />
    <circle cx="20" cy="20" r="5" fill="#fff" />
    <circle cx="13" cy="13" r="2.600" fill="#fff" />
    <circle cx="27" cy="13" r="2.600" fill="#fff" />
    <circle cx="13" cy="27" r="2.600" fill="#fff" />
    <circle cx="27" cy="27" r="2.600" fill="#fff" />
  </g>,
  <g>
    <path d="M8 7H32A3 3 0 0 1 35 10L31 31A4 4 0 0 1 27 34H13A4 4 0 0 1 9 31L5 10A3 3 0 0 1 8 7Z" fill="#757575" />
    <circle cx="20" cy="17" r="6" fill="#fff" />
    <path d="M17 20H23L24 29H16Z" fill="#fff" />
  </g>,
  <g>
    <rect x="5" y="5" width="30" height="30" rx="5" fill="#e30613" />
    <circle cx="13" cy="27.500" r="6" fill="#fff" />
    <circle cx="27" cy="27.500" r="6" fill="#fff" />
  </g>,
  <g>
    <rect x="5" y="7" width="13" height="13" rx="3" fill="#4d5056" />
    <rect x="5" y="22" width="13" height="13" rx="3" fill="#4d5056" />
    <path d="M27 5L35 13L27 21L19 13Z" fill="#1fb6f6" />
  </g>,
  <g>
    <rect x="4" y="4" width="32" height="32" fill="#2c86d6" />
    <path d="M17.500 7H22.500V20H28L20 30L12 20H17.500Z" fill="#fff" />
    <path d="M12 33.500H28" stroke="#fff" strokeWidth="2" />
  </g>,
  <g>
    <circle cx="20" cy="20" r="16" fill="#56a3db" />
    <path d="M10 12H18V24L26 12H32L19 31H13V15H10Z" fill="#fff" />
  </g>,
  <g>
    <rect x="4" y="4" width="32" height="32" rx="4" fill="#ececec" />
    <g fill="none" stroke="#f2401f" strokeWidth="2.500">
      <path d="M20 16V28M10 27V22H30V27" />
      <circle cx="10" cy="29.500" r="3" />
      <circle cx="20" cy="29.500" r="3" />
      <circle cx="30" cy="29.500" r="3" />
    </g>
    <circle cx="20" cy="13" r="5.500" fill="#f2401f" />
  </g>,
  <g>
    <rect x="8" y="8" width="24" height="24" rx="4" fill="#24323b" />
    <path d="M14.500 13.500L25.500 26.500M25.500 13.500L14.500 26.500" stroke="#fff" strokeWidth="2.200" />
  </g>,
  <g>
    <rect x="4" y="4" width="32" height="32" rx="3" fill="#dcdcdc" />
    <g fill="none" stroke="#fff" strokeWidth="1.800">
      <ellipse cx="20" cy="20" rx="13" ry="5" />
      <ellipse cx="20" cy="20" rx="13" ry="5" transform="rotate(60 20 20)" />
      <ellipse cx="20" cy="20" rx="13" ry="5" transform="rotate(120 20 20)" />
    </g>
    <circle cx="20" cy="20" r="2.500" fill="#fff" />
  </g>,
  <g>
    <circle cx="18" cy="13" r="6.500" fill="#fb8c2c" />
    <path d="M5 32C5 25 10 22 16 22L22 30L20 32Z" fill="#fb8c2c" />
    <path d="M20 28L25 32L34 21" fill="none" stroke="#23a346" strokeWidth="3.500" />
  </g>,
  <g>
    <circle cx="20" cy="20" r="16" fill="#2f3457" />
    <path d="M9 11H31L34 17L20 33L6 17Z" fill="#e8710f" />
    <path d="M11 13H29L31 17L20 29L9 17Z" fill="#b52a1e" />
    <path d="M15 25V13L24 24V13" fill="none" stroke="#f5a11e" strokeWidth="3" />
  </g>,
  <path d="M8 12H14V10A4.500 4.500 0 0 1 23 10V12H29A3 3 0 0 1 32 15V18.500A4.200 4.200 0 0 1 32 27V31A3 3 0 0 1 29 34H24A4.500 4.500 0 0 0 15 34H8A3 3 0 0 1 6 31V26A4.200 4.200 0 0 0 6 18V15A3 3 0 0 1 8 12Z" fill="#4f5358" />,
  <g fill="none" stroke="#444" strokeWidth="1.500">
    <circle cx="20" cy="19" r="18.500" fill="#fff" stroke="#666" />
    <path d="M11 13C13 11 16 11 17 13M23 13C25 11 28 11 30 14M12 17H17M24 17H29" strokeWidth="2.500" stroke="#222" />
    <path d="M20 16L19 24H22M16 29C19 31 23 31 26 28" strokeWidth="2" />
    <path d="M26 20C29 23 29 27 26 30" strokeWidth="3" stroke="#999" />
  </g>,
  <g fill="#4f5358">
    <circle cx="20" cy="10" r="3" />
    <circle cx="20" cy="20" r="3" />
    <circle cx="20" cy="30" r="3" />
  </g>,
];

const BannerArt = () => (
  <svg width="910" height="104" viewBox="1263 470 910 104" fill="none" stroke="#19c9e6" strokeWidth="2.500">
    <path d="M1275 470H2158L2126 562H1309Z" fill="#060f3f" stroke="none" />
    <path d="M1275 470L1310 560.500H2126L2158 470" />
    <path d="M1310 563.500H2126" stroke="#0d6f8d" strokeWidth="2" />
    <path d="M1267 480L1292 544M1293 550L1300 569H1340M2169 480L2145 544M2143 550L2137 569H2098" />
    <Label x={1717.5} y={518.5} size={51.9} fill="#14dffc">
      <tspan stroke="none">汤阴县基本公共卫生大数据监控平台</tspan>
    </Label>
  </svg>
);

/* ---------- page ---------- */

export default function App() {
  return (
    <Desktop>
      <GlobalStyle />
      <Window>
        <TabStrip>
          <BrowserTab>
            <Emblem size={34} outer="#4d86c4" inner="#3fae8c" />
            <TabTitle>全民健康信息管理平台</TabTitle>
            <Cross size={17} color="#3b3e41" width={3} />
          </BrowserTab>
          <NewTab>
            <svg width="26" height="26" viewBox="0 0 26 26" stroke="#333639" strokeWidth="3.2"><path d="M13 1V25M1 13H25" /></svg>
          </NewTab>
        </TabStrip>
        <Toolbar>
          <NavIcons>
            <svg width="32" height="32" viewBox="0 0 32 32" fill="none" stroke="#4f5358" strokeWidth="2.8"><path d="M29 16H5M16 4.500L4.500 16L16 27.500" /></svg>
            <svg width="32" height="32" viewBox="0 0 32 32" fill="none" stroke="#b4b7ba" strokeWidth="2.8"><path d="M3 16H27M16 4.500L27.500 16L16 27.500" /></svg>
            <svg width="32" height="32" viewBox="0 0 32 32" fill="none" stroke="#4f5358" strokeWidth="2.8"><path d="M26 9A11.500 11.500 0 1 0 27 19" /><path d="M29 3V14H18Z" fill="#4f5358" stroke="none" /></svg>
            <svg width="32" height="32" viewBox="0 0 32 32" fill="none" stroke="#4f5358" strokeWidth="2.8"><path d="M4 17L16 4.500L28 17M7.500 14V28H24.500V14" /></svg>
          </NavIcons>
          <Omnibox>
            <svg width="28" height="26" viewBox="0 0 28 26"><path d="M14 2L26 24H2Z" fill="#55585b" /><path d="M14 10V17M14 19V22" stroke="#fff" strokeWidth="2.5" /></svg>
            <Security>不安全</Security>
            <Url><b>39.97.167.48</b>:8080/index</Url>
            <svg width="32" height="32" viewBox="0 0 32 32"><path d="M16 4L19.500 12.500L28.500 13.200L21.600 19L23.800 28L16 23.100L8.200 28L10.400 19L3.500 13.200L12.500 12.500Z" fill="none" stroke="#4f5358" strokeWidth="2.500" /></svg>
          </Omnibox>
          <Extensions>
            {extensionArt.map((art, i) => (
              <ExtSlot key={i}>
                <svg width="40" height="40" viewBox="0 0 40 40">{art}</svg>
                {i === 3 && <ExtBadge>15</ExtBadge>}
              </ExtSlot>
            ))}
          </Extensions>
        </Toolbar>
        <Bookmarks>
          <Bookmark $w={125} $gap={18}><AppsGrid /><span>应用</span></Bookmark>
          {['开发', '产品', '运维', '常用', '视觉'].map(name => (
            <Bookmark key={name} $w={128}><Folder /><span>{name}</span></Bookmark>
          ))}
          <OtherBookmarks $w={167}><Folder /><span>其他书签</span></OtherBookmarks>
        </Bookmarks>

        <AppHeader>
          <Brand><Emblem size={54} outer="#fff" inner="#fff" /><span>医联体</span></Brand>
          <GlobeButton>
            <svg width="30" height="30" viewBox="0 0 30 30" fill="none" stroke="#fff" strokeWidth="2">
              <circle cx="15" cy="15" r="13" /><ellipse cx="15" cy="15" rx="6.500" ry="13" /><path d="M15 2V28M2 15H28M4 9H26M4 21H26" />
            </svg>
          </GlobeButton>
          <NetworkLogo>
            <Emblem size={44} outer="#4d86c4" inner="#3fae8c" />
            医联体网络
            <small>Medical Association<br />Network</small>
          </NetworkLogo>
          <AppTitle>汤阴县 全民健康信息管理平台</AppTitle>
          <Menu>
            <MenuItem $gap={110}>系统公告</MenuItem>
            <MenuItem $gap={109}>健康指导<MenuBadge>1</MenuBadge></MenuItem>
            <MenuItem $gap={100}>操作说明</MenuItem>
            <MenuItem $gap={0}>用户操作</MenuItem>
          </Menu>
        </AppHeader>

        <Content>
          <Divider />
          <PageTabs>
            <PageTab $w={222} $gap={17}>
              <svg width="32" height="32" viewBox="0 0 32 32" fill="none" stroke="#222" strokeWidth="2"><path d="M1.500 16.500L16 2L30.500 16.500M5.500 13V29.500H26.500V13" /></svg>
              后台首页
            </PageTab>
            <PageTab>
              <svg width="30" height="32" viewBox="0 0 30 32" fill="none" stroke="#000" strokeWidth="3"><path d="M15 15C12 9 8.500 8.500 6.500 8.500A5 5 0 0 0 6.500 18.500C9 18.500 11.500 18 15 13C18 8.500 20.500 8.500 23.500 8.500A5 5 0 0 1 23.500 18.500C21 18.500 19 18 17 16" /><path d="M12 23.500H17" /></svg>
              团队管理
              <CloseMark><Cross size={20} color="#aaa" width={1.5} /></CloseMark>
            </PageTab>
            <PageTab>
              <Cube color="#000" />
              服务人员
              <CloseMark><Cross size={20} color="#aaa" width={1.5} /></CloseMark>
            </PageTab>
            <PageTab $active>
              <Cube color="#fff" />
              统计分析表格
              <CloseMark><Cross size={20} color="#9db6c6" width={1.5} /></CloseMark>
            </PageTab>
            <PageActions>
              <svg width="38" height="36" viewBox="0 0 38 36" fill="none" stroke="#000" strokeWidth="2" strokeLinejoin="round"><path d="M9 2H29L36.500 13L19 34L1.500 13ZM1.500 13H36.500M9 2L13 13L19 34L25 13L29 2" /></svg>
              页面操作
              <svg width="36" height="14" viewBox="0 0 36 14"><path d="M11 1H35L23 13Z" fill="#111" /></svg>
            </PageActions>
          </PageTabs>

          <Dashboard>
            <Banner><BannerArt /></Banner>
            <Columns>
              <Column $rows="506px 504px 496px">
                <RecordsPanel />
                <HypertensionPanel />
                <DiabetesPanel />
              </Column>
              <Column $rows="762px 384px 375px">
                <MapPanel />
                <Pair $cols="814px 812px">
                  <ElderlyPanel />
                  <TuberculosisPanel />
                </Pair>
                <Pair $cols="812px 814px">
                  <MentalPanel />
                  <HerbalPanel />
                </Pair>
              </Column>
              <Column $rows="506px 504px 496px">
                <UsagePanel />
                <VisitsPanel />
                <SigningPanel />
              </Column>
            </Columns>
          </Dashboard>
        </Content>
      </Window>
    </Desktop>
  );
}
